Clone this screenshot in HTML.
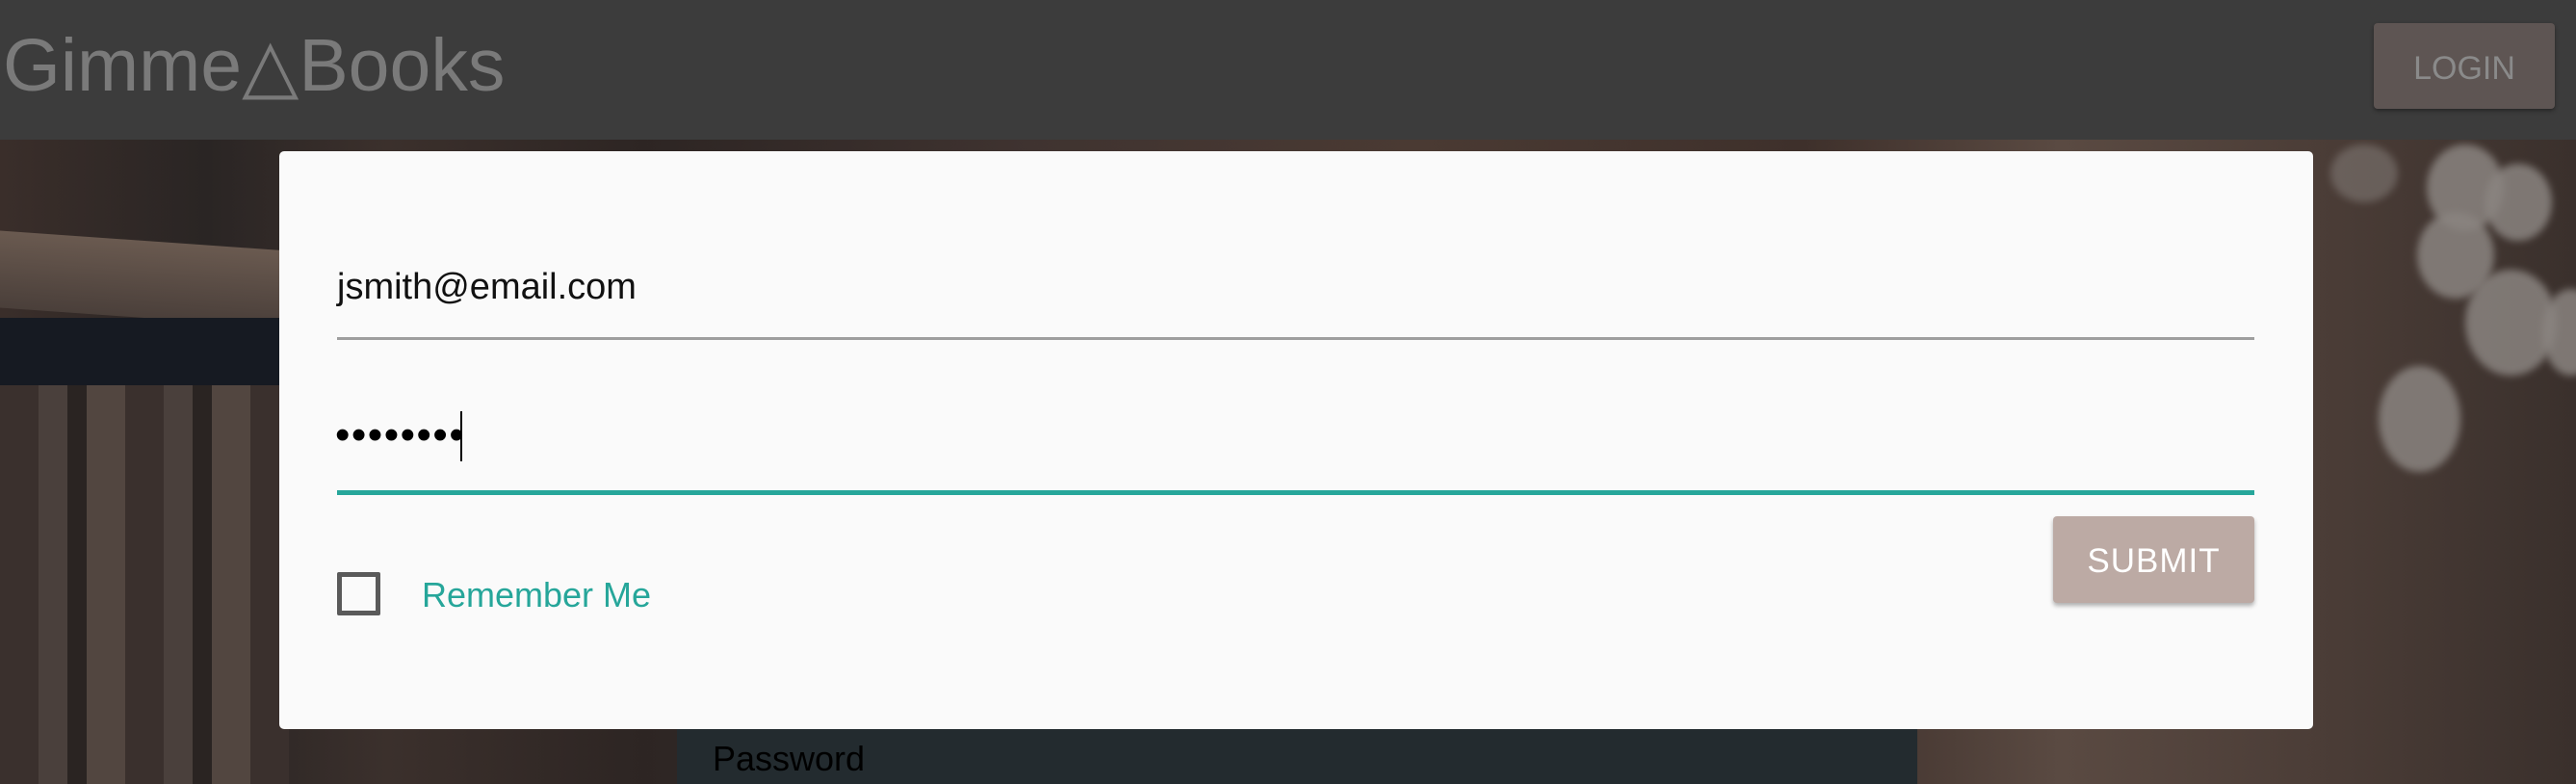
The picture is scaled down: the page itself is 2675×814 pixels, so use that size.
<!DOCTYPE html>
<html><head><meta charset="utf-8"><style>
*{margin:0;padding:0;box-sizing:border-box}
body{width:2675px;height:814px;overflow:hidden;position:relative;font-family:"Segoe UI","Liberation Sans",sans-serif;
background:linear-gradient(90deg,#3a2e2a 0%,#2a2524 8%,#3b302c 15%,#2d2523 25%,#3f3330 40%,#4a3a33 55%,#3e302b 70%,#5a4a42 80%,#4b3d37 90%,#3a302c 100%);}
.shelf{position:absolute;left:0;top:250px;width:300px;height:80px;background:linear-gradient(180deg,#6a5a50,#4a3f3a);transform:skewY(4deg)}
.dark{position:absolute;left:0;top:330px;width:300px;height:90px;background:#161a22}
.books{position:absolute;left:0;top:400px;width:300px;height:414px;background:repeating-linear-gradient(90deg,#3a302d 0 40px,#4a403c 40px 70px,#2a2422 70px 90px,#524640 90px 130px)}
.bok{position:absolute;border-radius:50%;background:#8a8480;filter:blur(4px);opacity:.85}
.panel{position:absolute;left:703px;top:757px;width:1288px;height:57px;background:#232b2f}
.panel span{position:absolute;left:37px;top:10px;font-size:36px;color:#000}
header{position:absolute;left:0;top:0;width:2675px;height:145px;background:#3c3c3c}
.logo{position:absolute;left:3px;top:24px;font-size:77px;color:#7a7a7a}
.login{position:absolute;left:2465px;top:24px;width:188px;height:89px;background:#5e5553;border-radius:4px;color:#8a8a8a;font-size:34px;text-align:center;line-height:95px;box-shadow:0 2px 4px rgba(0,0,0,.4)}
.card{position:absolute;left:290px;top:157px;width:2112px;height:600px;background:#fafafa;border-radius:5px}
.email{position:absolute;left:60px;top:120px;font-size:38px;color:#111}
.l1{position:absolute;left:60px;top:193px;width:1991px;height:3px;background:#9e9e9e}
.pw{position:absolute;left:58px;top:270px;font-size:44px;color:#000;letter-spacing:1.5px}
.cur{position:absolute;left:188px;top:270px;width:2px;height:52px;background:#000}
.l2{position:absolute;left:60px;top:352px;width:1991px;height:5px;background:#26a69a}
.cb{position:absolute;left:60px;top:437px;width:45px;height:45px;border:5px solid #5a5a5a;border-radius:2px}
.rm{position:absolute;left:148px;top:440px;font-size:36px;color:#26a69a}
.sub{position:absolute;left:1842px;top:379px;width:209px;height:90px;background:#bcaaa4;border-radius:4px;color:#fff;font-size:35px;text-align:center;line-height:94px;box-shadow:0 3px 5px rgba(0,0,0,.3);letter-spacing:1px}
</style></head><body>
<div class="shelf"></div><div class="dark"></div><div class="books"></div>
<div class="bok" style="left:2520px;top:150px;width:80px;height:90px"></div>
<div class="bok" style="left:2580px;top:170px;width:70px;height:80px"></div>
<div class="bok" style="left:2510px;top:220px;width:80px;height:90px"></div>
<div class="bok" style="left:2560px;top:280px;width:95px;height:110px"></div>
<div class="bok" style="left:2470px;top:380px;width:85px;height:110px"></div>
<div class="bok" style="left:2640px;top:300px;width:60px;height:90px"></div>
<div class="bok" style="left:2420px;top:150px;width:70px;height:60px;opacity:.5"></div>
<div class="panel"><span>Password</span></div>
<header><div class="logo">Gimme△Books</div><div class="login">LOGIN</div></header>
<div class="card">
<div class="email">jsmith@email.com</div><div class="l1"></div>
<div class="pw">••••••••</div><div class="cur"></div><div class="l2"></div>
<div class="cb"></div><div class="rm">Remember Me</div>
<div class="sub">SUBMIT</div>
</div>
</body></html>
